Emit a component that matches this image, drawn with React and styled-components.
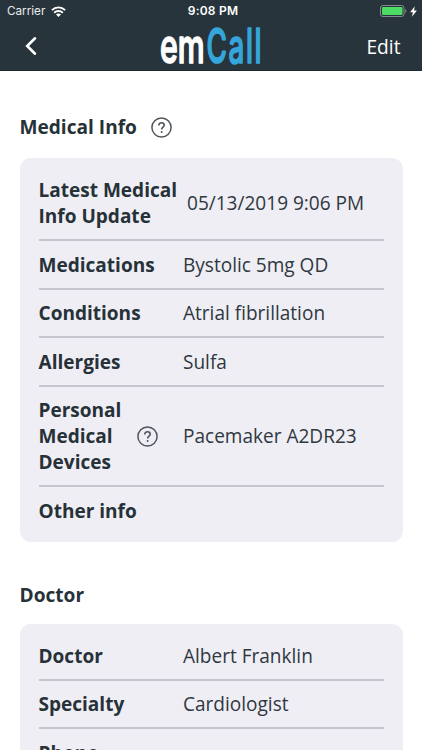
import styled, { createGlobalStyle } from "styled-components"

const GlobalStyle = createGlobalStyle`
    * {
        box-sizing: border-box;
    }

    body {
        margin: 0;
        background: #FFFFFF;
        overflow: hidden;
        font-family: 'Open Sans', 'Noto Sans', sans-serif;
        color: #263138;
    }
`;

const Screen = styled.div`
    width: 422px;
    height: 750px;
    overflow: hidden;
`;

const Header = styled.header`
    height: 71px;
    background: #28343b;
    border-bottom: 1px solid #1f292f;
    color: #FFFFFF;
`;

const StatusBar = styled.div`
    height: 22px;
    padding: 0 5px 0 7px;
    display: grid;
    grid-template-columns: 1fr auto 1fr;
    align-items: center;
    font-family: Inter, 'Liberation Sans', sans-serif;
    font-size: 12px;
    line-height: 22px;
    color: #e9ecee;
`;

const Carrier = styled.div`
    display: flex;
    align-items: center;
    gap: 6px;
    font-size: 11.7px;
`;

const Clock = styled.div`
    font-size: 12px;
    font-weight: 600;
    letter-spacing: 0.2px;
    padding-left: 2px;
    color: #FFFFFF;
`;

const Power = styled.div`
    display: flex;
    align-items: center;
    justify-content: flex-end;
    gap: 3px;
`;

const NavBar = styled.nav`
    height: 48px;
    padding: 0 21.5px 0 23px;
    display: grid;
    grid-template-columns: 1fr auto 1fr;
    align-items: center;
`;

const BackButton = styled.button`
    display: flex;
    justify-self: start;
    padding: 0 0 0 1px;
    border: none;
    background: none;
    color: inherit;
`;

const EditButton = styled.button`
    justify-self: end;
    padding: 0;
    border: none;
    background: none;
    color: inherit;
    font-family: inherit;
    font-size: 19.2px;
    line-height: 26px;
    padding-top: 2px;
`;

const LogoSvg = styled.svg`
    display: block;
    overflow: visible;
    margin: -9px 0;
    font-family: Inter, Roboto, sans-serif;
    font-size: 48px;
    font-weight: 500;
    stroke-width: 1.7px;
    stroke-linejoin: round;
`;

const Section = styled.section`
    padding: 0 19.5px;
    margin-top: ${props => props.first ? "43px" : "40px"};
`;

const Title = styled.h2`
    margin: 0 0 ${props => props.first ? "18px" : "15.5px"};
    height: 26px;
    display: flex;
    align-items: center;
    gap: 14.5px;
    font-size: 19.1px;
    font-weight: 700;
    line-height: 26px;
`;

const Card = styled.div`
    padding: 8.5px 19px;
    background: #efeef5;
    border-radius: 11px;
`;

const Row = styled.div`
    display: flex;
    align-items: center;
    padding: 10.75px 0 9.75px;
    font-size: 19.05px;
    line-height: 26px;

    & + & {
        border-top: 2px solid #c5c5cd;
    }
`;

const Label = styled.div`
    width: ${props => props.wide ? "148.5px" : "144.5px"};
    flex-shrink: 0;
    display: flex;
    align-items: center;
    font-weight: 700;
    white-space: pre-line;

    svg {
        margin-left: auto;
        margin-right: 25.5px;
    }
`;

const Value = styled.div`
    white-space: nowrap;
    color: #30383f;
`;

const Logo = () => (
    <LogoSvg width="104" height="64" viewBox="0 0 104 64" role="img" aria-label="emCall">
        <text transform="translate(0 49.2) scale(0.58 1)" textLength="77" lengthAdjust="spacingAndGlyphs" fill="#FFFFFF" stroke="#FFFFFF">em</text>
        <text transform="translate(46.5 49.2) scale(0.58 1)" textLength="95" lengthAdjust="spacing" fill="#35a6dc" stroke="#35a6dc">Call</text>
    </LogoSvg>
)

const Wifi = () => (
    <svg width="15" height="11" viewBox="0 0 15 11" fill="none" stroke="#FFFFFF" strokeWidth="1.9">
        <path d="M0.9 4.2C4.6 0.4 10.4 0.4 14.1 4.2" />
        <path d="M3.2 6.7C5.6 4.4 9.4 4.4 11.8 6.7" />
        <path d="M7.5 10.9L5 8.5C6.4 7.2 8.6 7.2 10 8.5Z" fill="#FFFFFF" stroke="none" />
    </svg>
)

const Battery = () => (
    <svg width="27" height="12" viewBox="0 0 27 12">
        <rect x="0.5" y="0.5" width="23.5" height="11" rx="2.5" fill="none" stroke="#838b90" />
        <rect x="2" y="2" width="20.5" height="8" rx="1.2" fill="#4cdb64" />
        <path d="M25.2 4C26.8 4.6 26.8 7.4 25.2 8Z" fill="#838b90" />
    </svg>
)

const Bolt = () => (
    <svg width="7" height="11" viewBox="0 0 7 11">
        <path d="M4.8 0.2L0.1 6.2H2.9L2 10.8L6.9 4.5H4Z" fill="#FFFFFF" />
    </svg>
)

const Chevron = () => (
    <svg width="14" height="20" viewBox="0 0 14 20" fill="none" stroke="#FFFFFF" strokeWidth="2.6" strokeLinecap="round">
        <path d="M11 2.3L3.2 10L11 17.7" />
    </svg>
)

const Help = () => (
    <svg width="21" height="21" viewBox="0 0 21 21" fill="none" stroke="#50565b">
        <circle cx="10.5" cy="10.5" r="9.6" strokeWidth="1.5" />
        <path d="M7.8 8.5C7.8 6.7 8.8 5.8 10.5 5.8C12.2 5.8 13.2 6.8 13.2 8.2C13.2 10.2 10.6 10.1 10.6 12.6" strokeWidth="1.6" />
        <circle cx="10.6" cy="14.9" r="1" fill="#50565b" stroke="none" />
    </svg>
)

const medical = [
    { label: "Latest Medical\nInfo Update", value: "05/13/2019 9:06 PM", wide: true },
    { label: "Medications", value: "Bystolic 5mg QD" },
    { label: "Conditions", value: "Atrial fibrillation" },
    { label: "Allergies", value: "Sulfa" },
    { label: "Personal\nMedical\nDevices", value: "Pacemaker A2DR23", help: true },
    { label: "Other info", value: "" },
];

const doctor = [
    { label: "Doctor", value: "Albert Franklin" },
    { label: "Specialty", value: "Cardiologist" },
    { label: "Phone", value: "" },
];

const InfoSection = ({ title, rows, help, first }) => (
    <Section first={first}>
        <Title first={first}>{title}{help && <Help />}</Title>
        <Card>
            {rows.map(r => (
                <Row key={r.label}>
                    <Label wide={r.wide}><span>{r.label}</span>{r.help && <Help />}</Label>
                    <Value>{r.value}</Value>
                </Row>
            ))}
        </Card>
    </Section>
)

const App = () => {
    return (
        <Screen>
            <GlobalStyle />
            <Header>
                <StatusBar>
                    <Carrier>Carrier <Wifi /></Carrier>
                    <Clock>9:08 PM</Clock>
                    <Power><Battery /><Bolt /></Power>
                </StatusBar>
                <NavBar>
                    <BackButton aria-label="Back"><Chevron /></BackButton>
                    <Logo />
                    <EditButton>Edit</EditButton>
                </NavBar>
            </Header>
            <InfoSection title="Medical Info" rows={medical} help first />
            <InfoSection title="Doctor" rows={doctor} />
        </Screen>
    )
}

export default App
